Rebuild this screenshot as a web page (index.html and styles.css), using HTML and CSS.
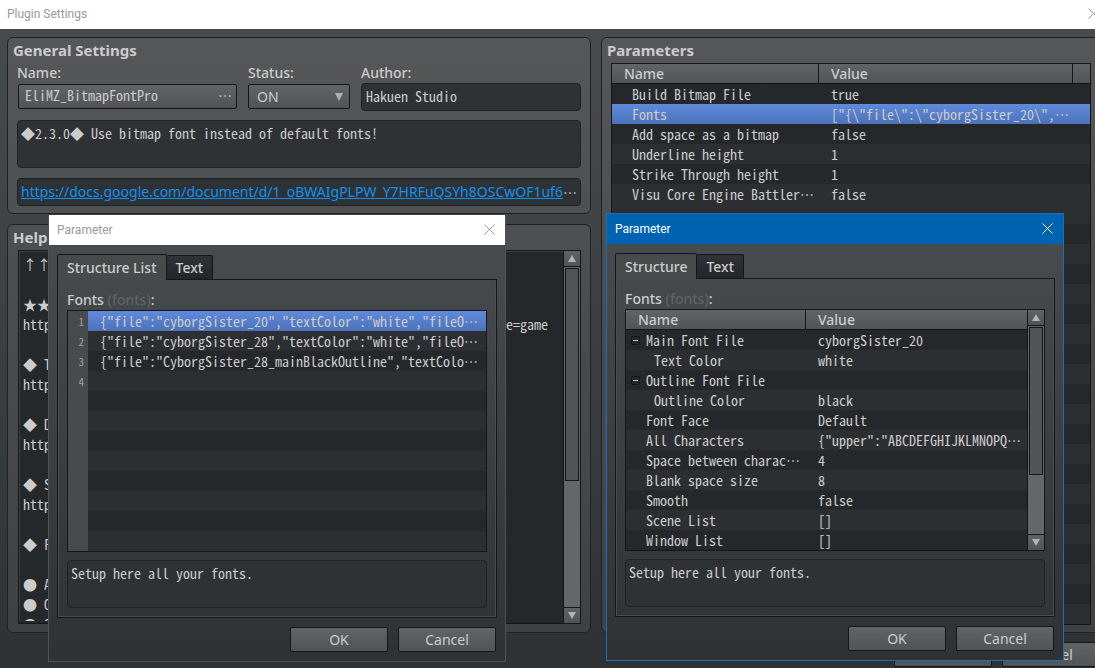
FILE: index.html
```html
<!DOCTYPE html>
<html lang="en">
<head>
    <meta charset="UTF-8">
    <meta name="viewport" content="width=device-width, initial-scale=1.0">
    <title>Plugin Settings</title>
    <link rel="stylesheet" href="styles.css">
</head>
<body>
    <div class="window">
        <div class="title-bar">
            <span>Plugin Settings</span>
            <button class="close" aria-label="Close">
                <svg width="11" height="11" viewBox="0 0 11 11"><path d="M0.5 0.5l10 10M10.5 0.5l-10 10"/></svg>
            </button>
        </div>
        <div class="window-body">
            <div class="columns">
                <div class="left-column">
                    <section class="panel general">
                        <h2>General Settings</h2>
                        <div class="fields">
                            <div class="field field-name">
                                <label for="plugin-name">Name:</label>
                                <button id="plugin-name" class="control"><span>EliMZ_BitmapFontPro</span><span class="dots">⋯</span></button>
                            </div>
                            <div class="field field-status">
                                <label for="status">Status:</label>
                                <div class="select-wrap">
                                    <select id="status" class="control">
                                        <option>ON</option>
                                        <option>OFF</option>
                                    </select>
                                    <svg class="select-arrow" width="8" height="8" viewBox="0 0 8 8"><path d="M0 0h8L4 8z"/></svg>
                                </div>
                            </div>
                            <div class="field field-author">
                                <label for="author">Author:</label>
                                <input id="author" class="box" type="text" value="Hakuen Studio" readonly>
                            </div>
                        </div>
                        <p class="box description">◆2.3.0◆ Use bitmap font instead of default fonts!</p>
                        <p class="box link-box"><a href="#">https://docs.google.com/document/d/1_oBWAIgPLPW_Y7HRFuQSYh8OSCwOF1uf6</a><span class="dots">⋯</span></p>
                    </section>
                    <section class="panel help">
                        <h2><label for="help-text">Help</label></h2>
                        <div class="help-area">
                            <textarea id="help-text" readonly>
↑↑

★★
https://store.rpgmakerweb.com/plugins/hakuen-studio/collection/mz?type=game

◆ Terms of use
https://www.hakuenstudio.com/terms

◆ Documentation
https://docs.google.com/document

◆ Support
https://www.patreon.com/hakuen

◆ Features

● Add bitmap fonts
● Outline colors
● Scene list</textarea>
                            <div class="scrollbar">
                                <button aria-label="Scroll up"><svg width="8" height="7" viewBox="0 0 8 7"><path d="M4 0l4 7H0z"/></svg></button>
                                <div class="track"><div class="thumb thumb-help"></div></div>
                                <button aria-label="Scroll down"><svg width="8" height="7" viewBox="0 0 8 7"><path d="M0 0h8L4 7z"/></svg></button>
                            </div>
                        </div>
                    </section>
                </div>
                <section class="panel parameters">
                    <h2>Parameters</h2>
                    <div class="grid-view stripes">
                        <table>
                            <colgroup><col class="col-name"><col><col class="col-end"></colgroup>
                            <thead>
                                <tr><th>Name</th><th>Value</th><th></th></tr>
                            </thead>
                            <tbody>
                                <tr><td>Build Bitmap File</td><td>true</td><td></td></tr>
                                <tr class="selected"><td>Fonts</td><td>["{\"file\":\"cyborgSister_20\",<span class="dots">⋯</span></td><td></td></tr>
                                <tr><td>Add space as a bitmap</td><td>false</td><td></td></tr>
                                <tr><td>Underline height</td><td>1</td><td></td></tr>
                                <tr><td>Strike Through height</td><td>1</td><td></td></tr>
                                <tr><td>Visu Core Engine Battler<span class="dots">⋯</span></td><td>false</td><td></td></tr>
                            </tbody>
                        </table>
                    </div>
                </section>
            </div>
            <div class="actions">
                <button class="control">OK</button>
                <button class="control">Cancel</button>
            </div>
        </div>
    </div>

    <div class="dialog dialog-list">
        <div class="title-bar">
            <span>Parameter</span>
            <button class="close" aria-label="Close">
                <svg width="11" height="11" viewBox="0 0 11 11"><path d="M0.5 0.5l10 10M10.5 0.5l-10 10"/></svg>
            </button>
        </div>
        <div class="dialog-body">
            <div class="tabs">
                <button class="tab active">Structure List</button>
                <button class="tab">Text</button>
            </div>
            <div class="page">
                <div class="caption">Fonts <span class="muted">(fonts)</span>:</div>
                <div class="list-view">
                    <div class="gutter"><span>1</span><span>2</span><span>3</span><span>4</span></div>
                    <ul class="stripes">
                        <li class="selected">{"file":"cyborgSister_20","textColor":"white","fileO<span class="dots">⋯</span></li>
                        <li>{"file":"cyborgSister_28","textColor":"white","fileO<span class="dots">⋯</span></li>
                        <li>{"file":"CyborgSister_28_mainBlackOutline","textColo<span class="dots">⋯</span></li>
                    </ul>
                </div>
                <p class="box description">Setup here all your fonts.</p>
            </div>
            <div class="actions">
                <button class="control">OK</button>
                <button class="control">Cancel</button>
            </div>
        </div>
    </div>

    <div class="dialog dialog-structure">
        <div class="title-bar">
            <span>Parameter</span>
            <button class="close" aria-label="Close">
                <svg width="11" height="11" viewBox="0 0 11 11"><path d="M0.5 0.5l10 10M10.5 0.5l-10 10"/></svg>
            </button>
        </div>
        <div class="dialog-body">
            <div class="tabs">
                <button class="tab active">Structure</button>
                <button class="tab">Text</button>
            </div>
            <div class="page">
                <div class="caption">Fonts <span class="muted">(fonts)</span>:</div>
                <div class="grid-view tree">
                    <table>
                        <colgroup><col class="col-tree"><col></colgroup>
                        <thead>
                            <tr><th>Name</th><th>Value</th></tr>
                        </thead>
                        <tbody>
                            <tr><td><button class="toggle" aria-label="Collapse"></button>Main Font File</td><td>cyborgSister_20</td></tr>
                            <tr><td class="child">Text Color</td><td>white</td></tr>
                            <tr><td><button class="toggle" aria-label="Collapse"></button>Outline Font File</td><td></td></tr>
                            <tr><td class="child">Outline Color</td><td>black</td></tr>
                            <tr><td>Font Face</td><td>Default</td></tr>
                            <tr><td>All Characters</td><td>{"upper":"ABCDEFGHIJKLMNOPQ<span class="dots">⋯</span></td></tr>
                            <tr><td>Space between charac<span class="dots">⋯</span></td><td>4</td></tr>
                            <tr><td>Blank space size</td><td>8</td></tr>
                            <tr><td>Smooth</td><td>false</td></tr>
                            <tr><td>Scene List</td><td>[]</td></tr>
                            <tr><td>Window List</td><td>[]</td></tr>
                        </tbody>
                    </table>
                    <div class="scrollbar">
                        <button aria-label="Scroll up"><svg width="8" height="7" viewBox="0 0 8 7"><path d="M4 0l4 7H0z"/></svg></button>
                        <div class="track"><div class="thumb thumb-tree"></div></div>
                        <button aria-label="Scroll down"><svg width="8" height="7" viewBox="0 0 8 7"><path d="M0 0h8L4 7z"/></svg></button>
                    </div>
                </div>
                <p class="box description">Setup here all your fonts.</p>
            </div>
            <div class="actions">
                <button class="control">OK</button>
                <button class="control">Cancel</button>
            </div>
        </div>
    </div>
</body>
</html>
```
FILE: styles.css
```css
:root {
    --text: #cccccc;
    --line: #141719;
    --box-line: #1f2224;
    --box: #2f3235;
    --row-dark: #25282a;
    --row-light: #2c2f31;
    --mono: "Noto Sans Mono CJK JP", "Liberation Mono", monospace;
    --ui: "Noto Sans", "Open Sans", sans-serif;
}

* {
    margin: 0;
    padding: 0;
    box-sizing: border-box;
}

body {
    height: 100vh;
    overflow: hidden;
    position: relative;
    color: var(--text);
    font-family: var(--ui);
    font-size: 14px;
    line-height: 20px;
}

button, input, select, textarea {
    font: inherit;
    color: inherit;
    border: none;
    outline: none;
}

/* Windows */
.window {
    width: calc(100% + 14px);
    height: 100vh;
    display: flex;
    flex-direction: column;
}

.title-bar {
    display: flex;
    justify-content: space-between;
    align-items: center;
    height: 29px;
    padding: 0 10px 2px 7px;
    background: white;
    color: #999999;
    font-family: Roboto, sans-serif;
    font-size: 12px;
}

.close {
    display: flex;
    background: none;
}

.close svg {
    stroke: currentColor;
    fill: none;
}

.window-body {
    flex: 1;
    min-height: 0;
    display: flex;
    flex-direction: column;
    padding: 8px 8px 1px 7px;
    background: linear-gradient(#484b4d, #2f3235);
}

.columns {
    flex: 1;
    min-height: 0;
    display: flex;
    gap: 10px;
}

.left-column {
    flex: 584 1 0;
    display: flex;
    flex-direction: column;
    gap: 10px;
}

.panel {
    border: 1px solid var(--box-line);
    border-radius: 6px;
    background: rgba(255, 255, 255, 0.07);
    padding: 2px 9px 7px;
}

h2 {
    margin: 0 0 3px -4px;
    font-size: 15px;
    line-height: 20px;
    font-weight: bold;
}

/* General settings */
.fields {
    display: flex;
    align-items: flex-start;
    gap: 11px;
    margin-bottom: 9px;
}

.field {
    display: flex;
    flex-direction: column;
}

.field-name {
    flex: 219 1 0;
    padding-left: 1px;
}

.field-status {
    flex: 102 1 0;
}

.field-author {
    flex: 220 1 0;
}

.field-name label {
    margin-left: -1px;
}

.field-name .control, .select-wrap {
    margin-top: 1px;
}

.field-name .control {
    display: flex;
    justify-content: space-between;
    padding: 0 4px 0 6px;
    font-family: var(--mono);
    line-height: 20px;
}

.select-wrap {
    position: relative;
    display: flex;
}

.select-wrap .control {
    appearance: none;
    flex: 1;
    padding-left: 8px;
}

.select-arrow {
    position: absolute;
    right: 7px;
    top: 9px;
    fill: #b0b0b0;
    pointer-events: none;
}

.control {
    height: 25px;
    border: 1px solid var(--line);
    border-radius: 2px;
    background: linear-gradient(#606466, #505456);
    line-height: 22px;
    text-align: center;
}

select.control {
    text-align: left;
}

.box {
    border: 1px solid var(--box-line);
    border-radius: 4px;
    background: var(--box);
    font-family: var(--mono);
}

input.box {
    width: 100%;
    height: 28px;
    padding: 0 4px 3px;
}

.description {
    height: 48px;
    padding: 2px 3px;
    white-space: nowrap;
}

.link-box {
    display: flex;
    height: 28px;
    margin-top: 10px;
    padding: 3px;
    white-space: nowrap;
}

.link-box a {
    color: #0c93f5;
    font-family: var(--ui);
}

.dots {
    display: inline-block;
    font-family: var(--mono);
}

/* Help */
.help {
    flex: 1;
    min-height: 0;
    display: flex;
    flex-direction: column;
    padding-bottom: 8px;
}

.help-area {
    flex: 1;
    min-height: 0;
    display: flex;
    margin-left: 1px;
    border: 1px solid var(--line);
    background: var(--row-dark);
}

.help-area textarea {
    flex: 1;
    resize: none;
    overflow: hidden;
    margin-bottom: 2px;
    padding: 3px 4px 0;
    background: none;
    box-shadow: inset 1px 1px #3e4143;
    font-family: var(--mono);
    white-space: pre;
}

/* Scrollbar */
.scrollbar {
    width: 17px;
    flex: none;
    display: flex;
    flex-direction: column;
    border-left: 1px solid var(--line);
    background: #63676a;
}

.scrollbar button {
    height: 15px;
    display: flex;
    align-items: center;
    justify-content: center;
    background: linear-gradient(#5f6365, #505456);
}

.scrollbar svg {
    fill: #b4b4b4;
}

.track {
    flex: 1;
    padding: 1px;
    border-top: 1px solid var(--line);
    border-bottom: 1px solid var(--line);
}

.thumb {
    border: 1px solid var(--line);
    background: #505456;
}

.thumb-help {
    height: 63%;
}

.thumb-tree {
    height: 72%;
}

/* Tables */
.parameters {
    flex: 500 1 0;
    display: flex;
    flex-direction: column;
}

.grid-view {
    flex: 1;
    display: flex;
    align-items: flex-start;
    border: 1px solid var(--line);
}

.stripes {
    background: repeating-linear-gradient(var(--row-dark) 0 20px, var(--row-light) 20px 40px);
}

.tree {
    flex: none;
    align-items: stretch;
}

table {
    flex: 1;
    width: 100%;
    table-layout: fixed;
    border-collapse: separate;
    border-spacing: 0;
}

.col-name {
    width: 207px;
}

.col-end {
    width: 17px;
}

.col-tree {
    width: 180px;
}

th {
    height: 20px;
    padding: 0 12px;
    border-right: 1px solid var(--line);
    border-bottom: 1px solid var(--line);
    background: linear-gradient(#606466, #505456);
    font-weight: 500;
    line-height: 19px;
    text-align: left;
}

th:last-child {
    border-right: none;
}

tbody {
    font-family: var(--mono);
}

td {
    height: 20px;
    padding-left: 12px;
    line-height: 20px;
    white-space: nowrap;
}

td:first-child {
    padding-left: 20px;
}

td.child:first-child {
    padding-left: 28px;
}

tbody tr {
    background: var(--row-dark);
}

tbody tr:nth-child(even) {
    background: var(--row-light);
}

tbody tr.selected, li.selected {
    background: linear-gradient(#5f8bdc, #4c71b8);
}

.toggle {
    width: 9px;
    height: 9px;
    margin: 0 6px 0 -15px;
    border: 1px solid var(--line);
    border-radius: 2px;
    background: linear-gradient(#c8c8c8, #c8c8c8) center / 5px 1px no-repeat;
    vertical-align: 2px;
}

/* Dialogs */
.dialog {
    position: absolute;
    width: 458px;
    border: 1px solid #505355;
}

.dialog-list {
    left: 48px;
    top: 215px;
    border-top: none;
}

.dialog-structure {
    left: 606px;
    top: 213px;
    border-color: #1b6fb5;
}

.dialog .title-bar {
    height: 30px;
    padding: 0 10px 1px 8px;
}

.dialog-structure .title-bar {
    background: #0063b1;
    color: white;
}

.dialog-body {
    padding: 9px 8px;
    background: linear-gradient(#484b4d, #2f3235);
}

.tabs {
    display: flex;
    align-items: flex-end;
}

.tab {
    height: 24px;
    padding: 0 9px;
    border: 1px solid var(--line);
    border-left: none;
    border-bottom: none;
    border-radius: 2px 2px 0 0;
    background: linear-gradient(#303336, #232628);
    font-weight: 500;
    line-height: 22px;
}

.tab.active {
    height: 26px;
    margin-bottom: -1px;
    border-left: 1px solid var(--line);
    background: #464a4b;
    z-index: 1;
}

.page {
    padding: 10px 9px 9px;
    border: 1px solid var(--line);
    box-shadow: inset -1px -1px #494d4f, inset 1px 0 #494d4f;
}

.caption, .field label {
    font-weight: 500;
}

.muted {
    color: #606365;
}

.list-view {
    display: flex;
    height: 242px;
    border: 1px solid var(--line);
}

.gutter {
    width: 20px;
    display: flex;
    flex-direction: column;
    padding-right: 4px;
    background: #484b4d;
    color: #a0a0a0;
    font-family: var(--mono);
    font-size: 11px;
    text-align: right;
}

.list-view ul {
    flex: 1;
    list-style: none;
    font-family: var(--mono);
}

.list-view li {
    height: 20px;
    padding-left: 12px;
    white-space: nowrap;
}

.page .description {
    margin-top: 8px;
}

.actions {
    display: flex;
    justify-content: flex-end;
    gap: 10px;
    margin-top: 9px;
    padding-right: 1px;
}

.actions .control {
    width: 98px;
}
```
